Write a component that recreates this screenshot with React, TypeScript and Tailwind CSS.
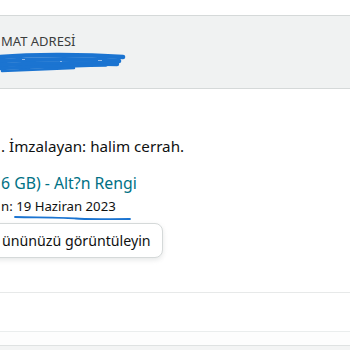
export default function App() {
  return (
    <div className="w-[350px] h-[350px] overflow-hidden bg-white font-['Noto_Sans',sans-serif] text-[#0f1111]">
      <div className="h-[15px]" />
      {/* adres başlığı */}
      <div className="h-[74px] border-y border-[#d5d9d9] bg-[#f0f2f2] pt-[17px]">
        <p className="text-[13px] leading-[16px] text-[#3b3d3d] pl-[1px]">MAT ADRESİ</p>
        <svg width="126" height="22" viewBox="0 0 126 22" className="mt-[3px]">
          <g fill="none" stroke="#1b74d1" strokeLinecap="round">
            <path d="M0 5 C 30 2.5, 80 2, 123 5" strokeWidth="4.5" />
            <path d="M0 9 C 40 7, 90 7, 119 9" strokeWidth="4.5" />
            <path d="M0 13 C 40 11, 90 11, 117 12" strokeWidth="4.5" />
            <path d="M0 16.5 C 30 15, 60 14, 106 13" strokeWidth="3.5" />
            <path d="M2 19 C 30 18, 50 17, 74 16" strokeWidth="2.5" />
          </g>
          <g fill="#8fb9e8">
            <rect x="22" y="7" width="3" height="1" />
            <rect x="60" y="9" width="2" height="1" />
            <rect x="98" y="8" width="4" height="1" />
          </g>
        </svg>
      </div>

      <div className="pt-[47px]">
        <p className="text-[15.2px] leading-[20px] pl-[1px]">. İmzalayan: halim cerrah.</p>
        <p className="mt-[17px] text-[15.8px] leading-[20px] text-[#007185] pl-[1px]">6 GB) - Alt?n Rengi</p>
        <p className="mt-[3px] text-[13.2px] leading-[20px] pl-[1px]">
          n:{' '}
          <span className="relative">
            19 Haziran 2023
            <svg width="118" height="6" viewBox="0 0 118 6" className="absolute left-[-2px] top-[18px]">
              <path d="M1 2 C 30 2.5, 55 2.5, 62 3.5 C 70 4.5, 90 4, 116 4" fill="none" stroke="#1b74d1" strokeWidth="1.8" strokeLinecap="round" />
            </svg>
          </span>
        </p>
        <div className="mt-[7px] -ml-[30px] w-[193px] h-[35px] rounded-[8px] border border-[#d5d9d9] bg-white shadow-[0_2px_5px_0_rgba(213,217,217,0.6)] flex items-center pl-[31px]">
          <span className="text-[14.2px] leading-[20px]">ününüzü görüntüleyin</span>
        </div>
      </div>

      <div className="mt-[34px] border-t border-[#e7e9e9] h-[39px]" />
      <div className="border-t border-[#eaeded] h-[14px] bg-[#fdfdfd]" />
      <div className="border-t border-[#dfe2e2] h-[10px] bg-[#f3f4f4]" />
    </div>
  );
}
